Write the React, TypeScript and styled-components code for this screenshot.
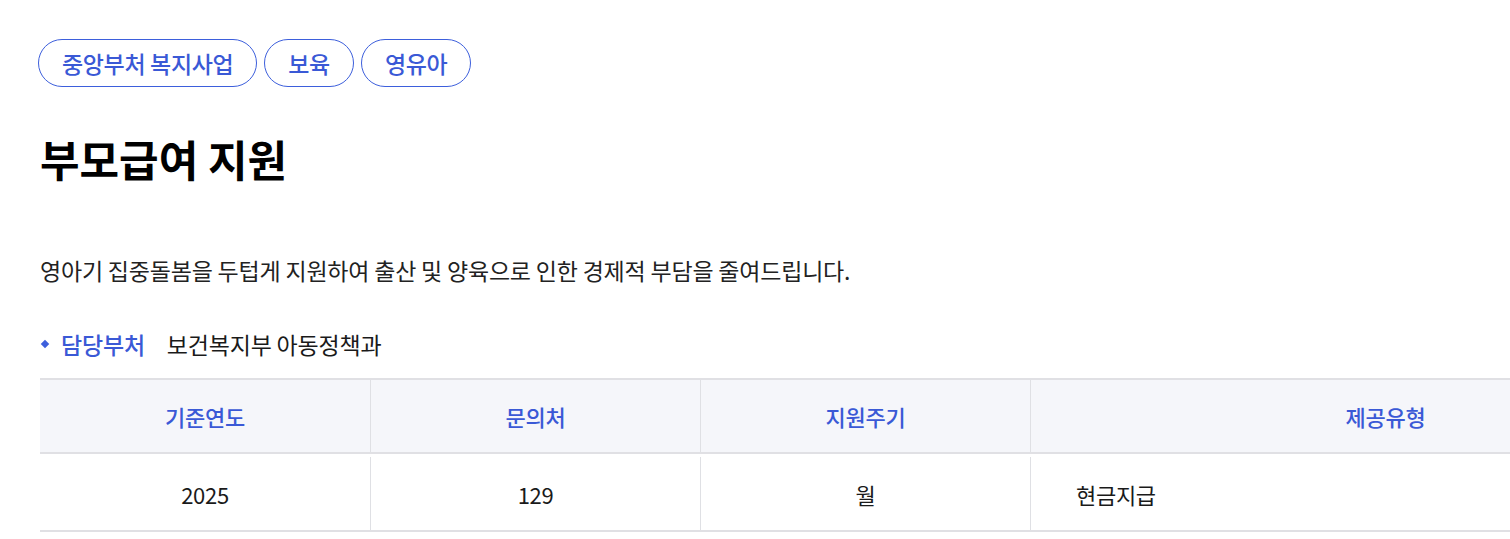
import React from "react";
import styled, { createGlobalStyle } from "styled-components";

const Global = createGlobalStyle`
  html, body { margin: 0; padding: 0; background: #fff; overflow: hidden; }
  body { font-family: "Noto Sans CJK KR", "Noto Sans", sans-serif; color: #222; }
`;

const Page = styled.div`
  width: 1510px;
  height: 539px;
  overflow: hidden;
  padding: 39px 0 0 38px;
  box-sizing: border-box;
`;

const TagRow = styled.div`
  display: flex;
  gap: 7px;
`;

const Tag = styled.span`
  display: inline-flex;
  align-items: center;
  justify-content: center;
  height: 48px;
  box-sizing: border-box;
  padding: 0 23px;
  border: 1px solid #3d5fdc;
  border-radius: 24px;
  color: #3a59d6;
  font-size: 23px;
  font-weight: 500;
  letter-spacing: -0.35px;
`;

const Title = styled.h1`
  margin: 43px 0 0 2px;
  font-size: 43px;
  line-height: 56px;
  font-weight: 700;
  color: #000;
  letter-spacing: 0;
`;

const Desc = styled.p`
  margin: 69px 0 0 2px;
  font-size: 23px;
  line-height: 30px;
  color: #222;
  letter-spacing: -0.2px;
`;

const DeptRow = styled.div`
  display: flex;
  align-items: center;
  margin: 44px 0 0 2px;
  font-size: 23px;
  line-height: 30px;
  letter-spacing: -0.2px;
`;

const Diamond = styled.span`
  width: 6px;
  height: 6px;
  background: #3d5fdc;
  transform: rotate(45deg);
  margin: 0 13px 0 2px;
`;

const DeptLabel = styled.span`
  color: #3a59d6;
  font-weight: 500;
  margin-right: 22px;
`;

const DeptValue = styled.span`
  color: #1a1a1a;
`;

const Table = styled.div`
  margin: 19px 0 0 2px;
  width: 1700px;
  display: grid;
  grid-template-columns: 330px 330px 330px 710px;
  border-top: 2px solid #e0e0e4;
  border-bottom: 2px solid #e0e0e4;
`;

const HeadCell = styled.div<{ $first?: boolean }>`
  height: 72px;
  display: flex;
  align-items: center;
  justify-content: center;
  background: #f5f6fa;
  border-left: ${(p) => (p.$first ? "none" : "1px solid #dfe0e4")};
  border-bottom: 2px solid #e0e0e4;
  color: #3a59d6;
  font-size: 22px;
  font-weight: 500;
  letter-spacing: -0.3px;
`;

const BodyCell = styled.div`
  padding-top: 3px;
  display: flex;
`;

const BodyInner = styled.div<{ $first?: boolean; $left?: boolean }>`
  flex: 1;
  height: 73px;
  display: flex;
  align-items: center;
  justify-content: ${(p) => (p.$left ? "flex-start" : "center")};
  padding-left: ${(p) => (p.$left ? "45px" : "0")};
  border-left: ${(p) => (p.$first ? "none" : "1px solid #dfe0e4")};
  color: #1a1a1a;
  font-size: 22px;
  letter-spacing: -0.3px;
`;

const heads = ["기준연도", "문의처", "지원주기", "제공유형"];
const values = ["2025", "129", "월", "현금지급"];

export default function App() {
  return (
    <>
      <Global />
      <Page>
        <TagRow>
          <Tag>중앙부처 복지사업</Tag>
          <Tag>보육</Tag>
          <Tag>영유아</Tag>
        </TagRow>
        <Title>부모급여 지원</Title>
        <Desc>영아기 집중돌봄을 두텁게 지원하여 출산 및 양육으로 인한 경제적 부담을 줄여드립니다.</Desc>
        <DeptRow>
          <Diamond />
          <DeptLabel>담당부처</DeptLabel>
          <DeptValue>보건복지부 아동정책과</DeptValue>
        </DeptRow>
        <Table>
          {heads.map((h, i) => (
            <HeadCell key={h} $first={i === 0}>
              {h}
            </HeadCell>
          ))}
          {values.map((v, i) => (
            <BodyCell key={v}>
              <BodyInner $first={i === 0} $left={i === 3}>
                {v}
              </BodyInner>
            </BodyCell>
          ))}
        </Table>
      </Page>
    </>
  );
}
